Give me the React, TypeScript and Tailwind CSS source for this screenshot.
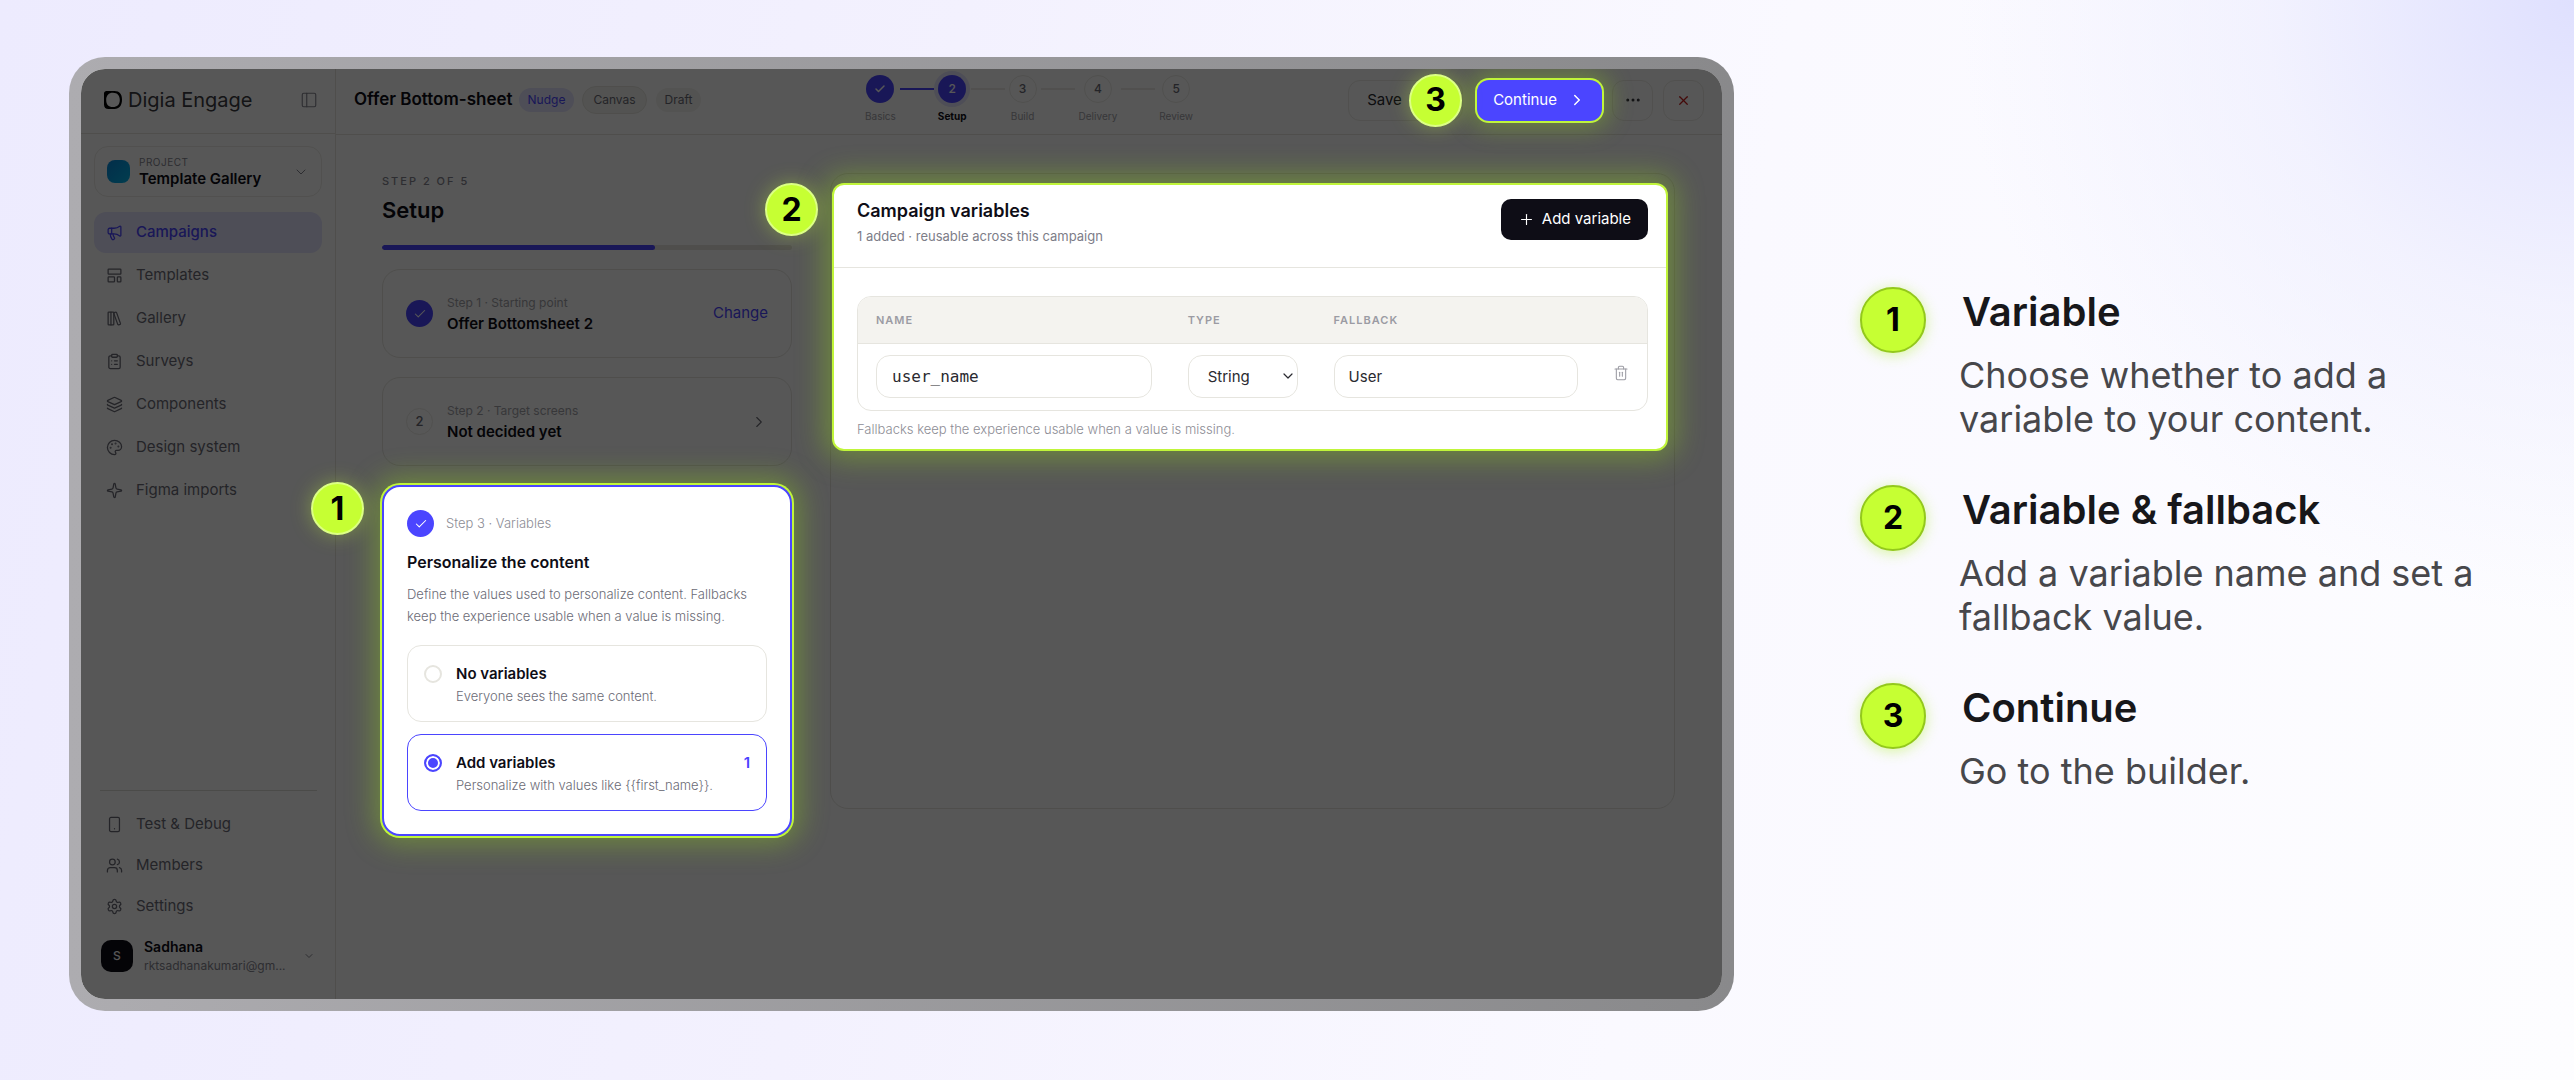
import { useState } from "react";
import type { ReactNode } from "react";
import {
  Check,
  ChevronDown,
  ChevronRight,
  ClipboardList,
  Ellipsis,
  Layers,
  LayoutTemplate,
  LibraryBig,
  Megaphone,
  Palette,
  PanelLeft,
  Plus,
  Settings,
  Smartphone,
  Sparkle,
  Trash2,
  Users,
  X,
} from "lucide-react";
import type { LucideIcon } from "lucide-react";

type NavItem = { label: string; icon: LucideIcon; active?: boolean };

const MAIN_NAV: NavItem[] = [
  { label: "Campaigns", icon: Megaphone, active: true },
  { label: "Templates", icon: LayoutTemplate },
  { label: "Gallery", icon: LibraryBig },
  { label: "Surveys", icon: ClipboardList },
  { label: "Components", icon: Layers },
  { label: "Design system", icon: Palette },
  { label: "Figma imports", icon: Sparkle },
];

const FOOT_NAV: NavItem[] = [
  { label: "Test & Debug", icon: Smartphone },
  { label: "Members", icon: Users },
  { label: "Settings", icon: Settings },
];

const STEPS = ["Basics", "Setup", "Build", "Delivery", "Review"];

const NOTES = [
  { title: "Variable", text: "Choose whether to add a variable to your content." },
  { title: "Variable & fallback", text: "Add a variable name and set a fallback value." },
  { title: "Continue", text: "Go to the builder." },
];

function Logo() {
  return (
    <svg viewBox="0 0 18 18" className="size-[18px] shrink-0" aria-hidden="true">
      <path
        fillRule="evenodd"
        fill="#000"
        d="M2.500 0h8C15.500 0 18 3 18 8.500c0 6-2.800 9.500-7.500 9.500H4.500C1.800 18 0 16.500 0 13.500v-11C0 1 1 0 2.500 0ZM9 1.800C4.600 1.800 2.200 4.500 2.200 9s2.300 7 6.600 7c4.500 0 7-2.600 7-7S13.400 1.800 9 1.800Z"
      />
    </svg>
  );
}

// Numbered marker that floats over the dimmed screen
function Badge({ n, className }: { n: number; className: string }) {
  return (
    <span
      className={`absolute z-30 flex size-[53px] items-center justify-center rounded-full border-2 border-[#dcff85] bg-[#c6ff33] text-[32px] leading-none font-bold text-black shadow-[0_0_20px_rgba(198,255,51,0.35)] ${className}`}
    >
      {n}
    </span>
  );
}

function NavLink({ item }: { item: NavItem }) {
  const Icon = item.icon;
  return (
    <a
      href="#"
      className={`flex h-[41px] items-center gap-[13px] rounded-xl px-3 text-[15px] ${
        item.active ? "bg-[#e4e4ff] font-medium text-[#4b45ff]" : "text-[#6b6b76]"
      }`}
    >
      <Icon className="size-[17px] shrink-0" strokeWidth={1.8} />
      {item.label}
    </a>
  );
}

function Sidebar() {
  return (
    <aside className="flex w-[255px] shrink-0 flex-col border-r border-[#e6e5df] bg-white">
      <div className="flex h-[65px] shrink-0 items-center border-b border-[#e6e5df] pr-[17px] pb-[3px] pl-[23px]">
        <Logo />
        <span className="ml-[6px] flex-1 text-xl text-[#3b3b42]">Digia Engage</span>
        <button type="button" aria-label="Toggle sidebar" className="text-[#85858f]">
          <PanelLeft className="size-[18px]" strokeWidth={1.5} />
        </button>
      </div>

      <button
        type="button"
        className="mx-[13px] mt-3 flex h-[51px] items-center rounded-[14px] border border-[#ecebe6] px-3 text-left"
      >
        <span className="size-[23px] rounded-lg bg-linear-to-br from-[#0a86d8] to-[#05b4e8]" />
        <span className="ml-[9px] flex-1">
          <span className="block text-[10px] leading-[14px] tracking-wider text-[#85858f]">
            PROJECT
          </span>
          <span className="block text-[15px] leading-5 font-semibold text-[#0e0d16]">
            Template Gallery
          </span>
        </span>
        <ChevronDown className="size-4 text-[#85858f]" strokeWidth={1.5} />
      </button>

      <nav className="mx-[13px] mt-[15px] flex flex-col gap-[2px]">
        {MAIN_NAV.map((item) => (
          <NavLink key={item.label} item={item} />
        ))}
      </nav>

      <div className="mt-auto mr-[18px] ml-[19px] border-t border-[#dddcd6]" />
      <nav className="mx-[13px] mt-[13px] flex flex-col">
        {FOOT_NAV.map((item) => (
          <NavLink key={item.label} item={item} />
        ))}
      </nav>
      <button
        type="button"
        className="mt-[10px] mb-6 flex items-center pr-[20px] pl-5 text-left"
      >
        <span className="flex size-8 items-center justify-center rounded-[10px] bg-[#0e0d16] text-xs font-medium text-white">
          S
        </span>
        <span className="ml-[11px] flex-1">
          <span className="block text-sm leading-5 font-semibold text-[#0e0d16]">Sadhana</span>
          <span className="block text-xs leading-[18px] text-[#85858f]">rktsadhanakumari@gm...</span>
        </span>
        <ChevronDown className="size-3 text-[#85858f]" strokeWidth={2} />
      </button>
    </aside>
  );
}

function Stepper() {
  return (
    <ol className="absolute top-[6px] left-[529px] flex gap-1">
      {STEPS.map((step, i) => (
        <li key={step} className="flex gap-1">
          {i > 0 && (
            <span
              className={`mt-[13px] h-[2px] w-[34px] ${i === 1 ? "bg-[#4b45ff]" : "bg-[#ecebe6]"}`}
            />
          )}
          <span className="flex flex-col items-center">
            <span
              className={`flex size-7 items-center justify-center rounded-full text-xs font-medium ${
                i === 0
                  ? "bg-[#4b45ff] text-white"
                  : i === 1
                    ? "bg-[#4b45ff] text-white ring-4 ring-[#e4e3ff]"
                    : "border border-[#ecebe6] text-[#6b6b76]"
              }`}
            >
              {i === 0 ? <Check className="size-3" strokeWidth={3} /> : i + 1}
            </span>
            <span
              className={`mt-[5px] text-[10px] leading-4 ${
                i === 1 ? "font-bold text-[#0e0d16]" : "text-[#a1a1a8]"
              }`}
            >
              {step}
            </span>
          </span>
        </li>
      ))}
    </ol>
  );
}

function TopBar() {
  return (
    <header className="relative flex h-[66px] shrink-0 items-center border-b border-[#e6e5df] pr-[18px] pb-[3px] pl-[18px]">
      <h1 className="text-[17px] font-semibold text-[#0e0d16]">Offer Bottom-sheet</h1>
      <span className="ml-[6px] rounded-full bg-[#e4e3ff] px-[9px] text-xs leading-6 text-[#4b45ff]">
        Nudge
      </span>
      <span className="ml-2 rounded-full border border-[#e6e5df] bg-[#f4f3ef] px-[10px] text-xs leading-[26px] text-[#6b6b76]">
        Canvas
      </span>
      <span className="ml-[9px] rounded-full bg-[#f4f3ef] px-[9px] text-xs leading-6 text-[#6b6b76]">
        Draft
      </span>
      <Stepper />

      <div className="ml-auto flex items-center gap-[10px]">
        <button
          type="button"
          className="h-[41px] w-[115px] rounded-xl border border-[#ecebe6] pl-[18px] text-left text-[15px] text-[#2a2a30]"
        >
          Save
        </button>
        <div className="relative ml-1">
          <Badge n={3} className="top-[-6px] left-[-68px]" />
          <button
            type="button"
            className="relative z-20 flex h-[41px] items-center gap-[11px] rounded-xl bg-[#4b45ff] px-4 text-[15px] text-white shadow-[0_0_0_2px_#c0f53a,0_0_24px_6px_rgba(155,230,20,0.35)]"
          >
            Continue
            <ChevronRight className="size-[18px]" strokeWidth={2} />
          </button>
        </div>
        <button
          type="button"
          aria-label="More actions"
          className="flex size-[41px] items-center justify-center rounded-xl border border-[#ecebe6] text-[#3b3b42]"
        >
          <Ellipsis className="size-[18px]" />
        </button>
        <button
          type="button"
          aria-label="Close"
          className="flex size-[41px] items-center justify-center rounded-xl border border-[#ecebe6] text-[#c81e1e]"
        >
          <X className="size-[15px]" />
        </button>
      </div>
    </header>
  );
}

function DoneMark() {
  return (
    <span className="flex size-[27px] shrink-0 items-center justify-center rounded-full bg-[#4b45ff] text-white">
      <Check className="size-[14px]" strokeWidth={1.8} />
    </span>
  );
}

function StepCard({
  mark,
  kicker,
  title,
  action,
}: {
  mark: ReactNode;
  kicker: string;
  title: string;
  action: ReactNode;
}) {
  return (
    <div className="flex h-[89px] items-center rounded-[18px] border border-[#e6e5df] px-[23px]">
      {mark}
      <div className="ml-[14px] flex-1">
        <p className="text-xs leading-5 text-[#a1a1a8]">{kicker}</p>
        <p className="text-[15px] leading-[22px] font-semibold text-[#0e0d16]">{title}</p>
      </div>
      {action}
    </div>
  );
}

function SetupColumn() {
  const [mode, setMode] = useState("add");
  const options = [
    { id: "none", title: "No variables", text: "Everyone sees the same content." },
    { id: "add", title: "Add variables", text: "Personalize with values like {{first_name}}.", count: 1 },
  ];

  return (
    <div className="w-[410px] shrink-0">
      <p className="text-[11px] leading-4 font-medium tracking-[2px] text-[#85858f]">STEP 2 OF 5</p>
      <h2 className="mt-[7px] text-[22px] leading-7 font-semibold text-[#0e0d16]">Setup</h2>
      <div className="mt-[21px] h-[5px] overflow-hidden rounded-full bg-[#e6e5df]">
        <div className="h-full w-2/3 rounded-full bg-[#4b45ff]" />
      </div>

      <div className="mt-[19px] flex flex-col gap-[19px]">
        <StepCard
          mark={<DoneMark />}
          kicker="Step 1 · Starting point"
          title="Offer Bottomsheet 2"
          action={
            <button type="button" className="text-[15px] text-[#4b45ff]">
              Change
            </button>
          }
        />
        <StepCard
          mark={
            <span className="flex size-[27px] items-center justify-center rounded-full border border-[#ecebe6] text-[13px] font-medium text-[#6b6b76]">
              2
            </span>
          }
          kicker="Step 2 · Target screens"
          title="Not decided yet"
          action={<ChevronRight className="size-[18px] text-[#6b6b76]" strokeWidth={1.5} />}
        />

        <div className="relative z-20 rounded-[18px] border-2 border-[#4b45ff] bg-white p-[23px] shadow-[0_0_0_2px_#c0f53a,0_0_28px_8px_rgba(155,230,20,0.35)]">
          <Badge n={1} className="top-[-5px] left-[-73px]" />
          <div className="flex items-center gap-3">
            <DoneMark />
            <span className="text-[13px] font-light text-[#8d8d95]">Step 3 · Variables</span>
          </div>
          <h3 className="mt-[13px] text-base leading-6 font-semibold text-[#0e0d16]">
            Personalize the content
          </h3>
          <p className="mt-[9px] text-[13px] leading-[22px] font-light text-[#6b6b76]">
            Define the values used to personalize content. Fallbacks keep the experience usable when
            a value is missing.
          </p>
          <div className="mt-[18px] flex flex-col gap-3">
            {options.map((o) => (
              <label
                key={o.id}
                className={`flex h-[77px] items-start rounded-[14px] border pt-[17px] pr-4 pl-4 ${
                  mode === o.id ? "border-[#4b45ff]" : "border-[#e6e5df]"
                }`}
              >
                <input
                  type="radio"
                  name="variables"
                  checked={mode === o.id}
                  onChange={() => setMode(o.id)}
                  className="mt-[2px] size-[18px] shrink-0 appearance-none rounded-full border-2 border-[#e6e5df] checked:border-[#4b45ff] checked:bg-[#4b45ff] checked:shadow-[inset_0_0_0_2px_#fff]"
                />
                <span className="ml-[14px] flex-1">
                  <span className="block text-[15px] leading-[22px] font-semibold text-[#0e0d16]">
                    {o.title}
                  </span>
                  <span className="block text-[13px] leading-[22px] font-light text-[#6b6b76]">
                    {o.text}
                  </span>
                </span>
                {o.count && (
                  <span className="text-[15px] leading-[22px] font-semibold text-[#4b45ff]">
                    {o.count}
                  </span>
                )}
              </label>
            ))}
          </div>
        </div>
      </div>
    </div>
  );
}

function VariablesPanel() {
  const [name, setName] = useState("user_name");
  const [fallback, setFallback] = useState("User");
  const th = "px-[18px] text-left text-[11px] font-semibold tracking-[1px] text-[#9b9ba3]";
  const field =
    "block h-[43px] w-full rounded-[14px] border border-[#e6e5df] bg-white text-[#2a2a30] outline-none";

  return (
    <section className="min-h-[636px] min-w-0 flex-1 self-start rounded-[18px] border border-[#e6e5df] pt-[9px] pr-[6px] pl-px">
      <div className="relative z-20 rounded-xl border-2 border-[#c0f53a] bg-white shadow-[0_0_28px_8px_rgba(155,230,20,0.35)]">
        <Badge n={2} className="top-[-2px] left-[-69px]" />
        <div className="flex items-start justify-between border-b border-[#e6e5df] pt-[14px] pr-[18px] pb-[21px] pl-[23px]">
          <div>
            <h3 className="text-lg leading-6 font-semibold text-[#0e0d16]">Campaign variables</h3>
            <p className="mt-[3px] text-[13px] leading-5 text-[#7d7d88]">
              1 added · reusable across this campaign
            </p>
          </div>
          <button
            type="button"
            className="flex h-[41px] items-center gap-[7px] rounded-[10px] bg-[#0e0d16] px-[17px] text-[15px] text-white"
          >
            <Plus className="size-[17px]" strokeWidth={1.6} />
            Add variable
          </button>
        </div>

        <div className="pt-7 pr-[18px] pb-2 pl-[23px]">
          <div className="overflow-hidden rounded-[14px] border border-[#e6e5df]">
            <table className="w-full table-fixed">
              <thead>
                <tr className="h-[46px] border-b border-[#e6e5df] bg-[#f4f3ef]">
                  <th className={`w-[39.5%] ${th}`}>NAME</th>
                  <th className={`w-[18.5%] ${th}`}>TYPE</th>
                  <th className={`w-[35.5%] ${th}`}>FALLBACK</th>
                  <th aria-label="Actions" />
                </tr>
              </thead>
              <tbody>
                <tr className="h-[67px]">
                  <td className="px-[18px]">
                    <input
                      aria-label="Name"
                      value={name}
                      onChange={(e) => setName(e.target.value)}
                      className={`${field} px-[15px] font-['DejaVu_Sans_Mono',monospace] text-base`}
                    />
                  </td>
                  <td className="px-[18px]">
                    <div className="relative">
                      <select
                        aria-label="Type"
                        className={`${field} appearance-none pl-[19px] text-[15px]`}
                      >
                        <option>String</option>
                        <option>Number</option>
                        <option>Boolean</option>
                      </select>
                      <ChevronDown
                        className="pointer-events-none absolute top-[13px] right-[2px] size-4 text-[#2a2a30]"
                        strokeWidth={1.8}
                      />
                    </div>
                  </td>
                  <td className="px-[18px]">
                    <input
                      aria-label="Fallback"
                      value={fallback}
                      onChange={(e) => setFallback(e.target.value)}
                      className={`${field} px-[14px] text-[15px]`}
                    />
                  </td>
                  <td className="pb-[10px] text-center">
                    <button type="button" aria-label="Delete variable" className="align-middle">
                      <Trash2 className="size-4 text-[#9b9ba3]" strokeWidth={1.6} />
                    </button>
                  </td>
                </tr>
              </tbody>
            </table>
          </div>
          <p className="mt-[6px] text-[13px] leading-6 font-light text-[#8d8d95]">
            Fallbacks keep the experience usable when a value is missing.
          </p>
        </div>
      </div>
    </section>
  );
}

export default function App() {
  return (
    <div className="flex min-h-screen bg-[radial-gradient(circle_at_100%_0%,#dfe0fe_0%,rgba(238,238,254,0.7)_11%,transparent_22%),linear-gradient(100deg,#edebfe_0%,#f3f1fe_35%,#faf9ff_65%,#fdfdff_100%)] pt-[57px] pb-[69px] pl-[69px] font-['Inter','Liberation_Sans',sans-serif]">
      <div className="flex min-w-0 flex-1 rounded-[36px] bg-linear-to-r from-[#adacb0] to-[#89898b] p-3">
        <div className="relative isolate flex min-w-0 flex-1 overflow-hidden rounded-3xl bg-white">
          <Sidebar />
          <div className="flex min-w-0 flex-1 flex-col">
            <TopBar />
            <main className="flex flex-1 gap-[38px] pt-[38px] pr-[47px] pl-[46px]">
              <SetupColumn />
              <VariablesPanel />
            </main>
          </div>
          <div className="pointer-events-none absolute inset-0 z-10 bg-black/66" />
        </div>
      </div>

      <ol className="flex w-[840px] shrink-0 flex-col gap-[44px] pt-[230px] pl-[126px]">
        {NOTES.map((note, i) => (
          <li key={note.title} className="flex gap-[33px]">
            <span className="flex size-[66px] shrink-0 items-center justify-center rounded-full border-2 border-[#93c81c] bg-[#c6ff33] text-[32px] leading-none font-bold text-black shadow-[0_2px_14px_rgba(170,240,30,0.45)]">
              {i + 1}
            </span>
            <div className="w-[530px]">
              <h2 className="ml-[3px] text-[40px] leading-[50px] font-semibold text-[#17171a]">
                {note.title}
              </h2>
              <p className="mt-[16px] text-4xl leading-[44px] text-[#47474b]">{note.text}</p>
            </div>
          </li>
        ))}
      </ol>
    </div>
  );
}
